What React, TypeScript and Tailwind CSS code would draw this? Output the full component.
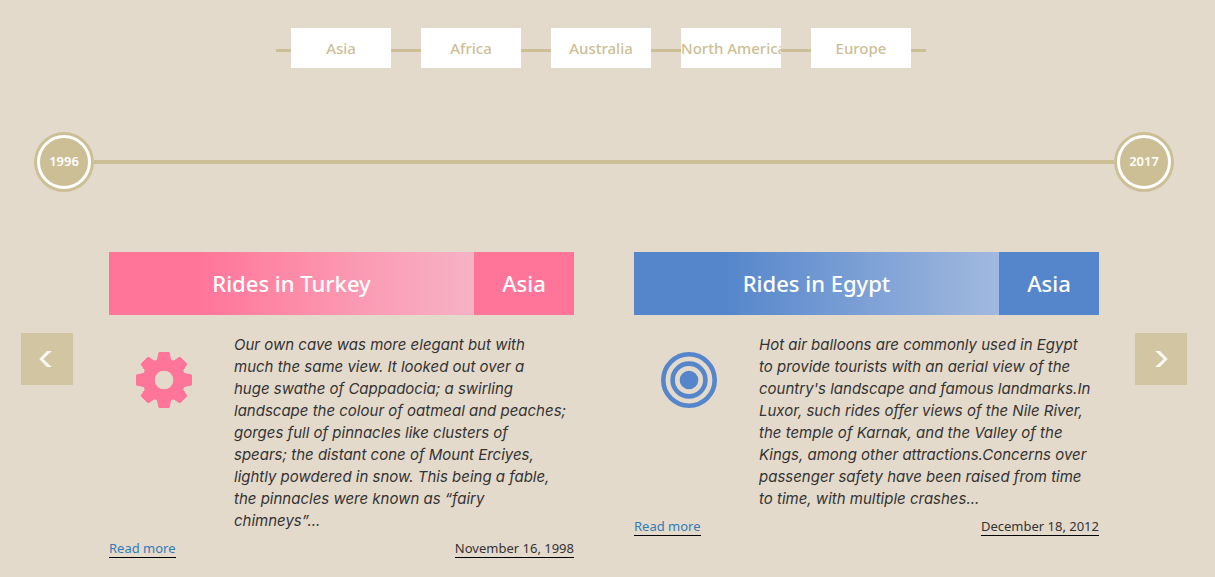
import React from "react";

const regions = ["Asia", "Africa", "Australia", "North America", "Europe"];

function GearIcon() {
  const points: string[] = [];
  for (let i = 0; i < 8; i++) {
    const a = (i * Math.PI) / 4;
    for (const [x, y] of [[-6.6, -20], [-5, -27.5], [5, -27.5], [6.6, -20]]) {
      points.push(
        `${(x * Math.cos(a) - y * Math.sin(a)).toFixed(2)} ${(x * Math.sin(a) + y * Math.cos(a)).toFixed(2)}`
      );
    }
  }
  const d = `M${points.join("L")}ZM-9.8 0a9.8 9.8 0 1 0 19.6 0a9.8 9.8 0 1 0 -19.6 0Z`;
  return (
    <svg viewBox="-28 -28 56 56" className="size-14" aria-hidden="true">
      <path d={d} fill="#ff7599" fillRule="evenodd" stroke="#ff7599" strokeWidth="1" strokeLinejoin="round" />
    </svg>
  );
}

function TargetIcon() {
  return (
    <svg viewBox="-28 -28 56 56" className="size-14" fill="none" stroke="#5586cb" aria-hidden="true">
      <circle r="25.7" strokeWidth="4.6" />
      <circle r="16.4" strokeWidth="4.6" />
      <circle r="9.3" fill="#5586cb" stroke="none" />
    </svg>
  );
}

type Story = {
  title: string;
  region: string;
  text: string;
  date: string;
  icon: React.ReactNode;
  titleClass: string;
  tagClass: string;
};

const stories: Story[] = [
  {
    title: "Rides in Turkey",
    region: "Asia",
    text: `Our own cave was more elegant but with
much the same view. It looked out over a
huge swathe of Cappadocia; a swirling
landscape the colour of oatmeal and peaches;
gorges full of pinnacles like clusters of
spears; the distant cone of Mount Erciyes,
lightly powdered in snow. This being a fable,
the pinnacles were known as “fairy
chimneys”...`,
    date: "November 16, 1998",
    icon: <GearIcon />,
    titleClass: "bg-linear-to-r from-[#ff7599] from-25% to-[#f6b2c5]",
    tagClass: "bg-[#ff7599]",
  },
  {
    title: "Rides in Egypt",
    region: "Asia",
    text: `Hot air balloons are commonly used in Egypt
to provide tourists with an aerial view of the
country's landscape and famous landmarks.In
Luxor, such rides offer views of the Nile River,
the temple of Karnak, and the Valley of the
Kings, among other attractions.Concerns over
passenger safety have been raised from time
to time, with multiple crashes...`,
    date: "December 18, 2012",
    icon: <TargetIcon />,
    titleClass: "bg-linear-to-r from-[#5586cb] from-25% to-[#a2b9df]",
    tagClass: "bg-[#5586cb]",
  },
];

function YearBadge({ year }: { year: string }) {
  return (
    <div className="flex size-[60px] shrink-0 items-center justify-center rounded-full bg-[#ccbe95]">
      <div className="flex size-[54px] items-center justify-center rounded-full border-3 border-white text-[13px] font-semibold text-white">
        {year}
      </div>
    </div>
  );
}

function ArrowButton({ label, d }: { label: string; d: string }) {
  return (
    <button
      type="button"
      aria-label={label}
      className="mt-[81px] flex size-[52px] shrink-0 items-center justify-center bg-[#d2c5a2]"
    >
      <svg viewBox="0 0 16 16" className="size-4 fill-[#f9f8f4]" aria-hidden="true">
        <path d={d} />
      </svg>
    </button>
  );
}

function StoryCard({ story }: { story: Story }) {
  return (
    <article className="text-[#333]">
      <header className="flex h-[63px] text-[22px] font-medium text-white">
        <h2 className={`flex flex-1 items-center justify-center ${story.titleClass}`}>{story.title}</h2>
        <span className={`flex w-[100px] items-center justify-center ${story.tagClass}`}>{story.region}</span>
      </header>
      <div className="mt-[19px] flex">
        <div className="flex w-[125px] shrink-0 justify-start pt-[18px] pl-[27px]">{story.icon}</div>
        <p className="min-w-0 flex-1 font-['Inter','Noto_Sans',sans-serif] text-[15px] leading-[22px] whitespace-pre italic">
          {story.text}
        </p>
      </div>
      <footer className="mt-2 flex justify-between text-[13px] leading-[17px]">
        <a href="#story" className="border-b border-black text-[#337ab7]">Read more</a>
        <time className="border-b border-black">{story.date}</time>
      </footer>
    </article>
  );
}

export default function App() {
  return (
    <main className="min-h-screen bg-[#e4dacb] pt-7 pr-[7px] font-['Noto_Sans','Open_Sans',sans-serif]">
      <nav aria-label="Regions" className="flex justify-center pr-[6px]">
        <div className="flex items-center">
          <span className="mt-[5px] h-[3px] w-[15px] bg-[#ccbe95]" />
          {regions.map((name, i) => (
            <React.Fragment key={name}>
              {i > 0 && <span className="mt-[5px] h-[3px] w-[30px] bg-[#ccbe95]" />}
              <button
                type="button"
                className="flex h-10 w-[100px] items-center overflow-hidden bg-white text-[15px] font-medium whitespace-nowrap text-[#ccbe95]"
              >
                <span className="mx-auto">{name}</span>
              </button>
            </React.Fragment>
          ))}
          <span className="mt-[5px] h-[3px] w-[15px] bg-[#ccbe95]" />
        </div>
      </nav>

      <div className="mt-16 flex items-center px-[34px]">
        <YearBadge year="1996" />
        <div className="h-1 flex-1 bg-[#ccbe95]" />
        <YearBadge year="2017" />
      </div>

      <section aria-label="Stories" className="mt-[60px] flex items-start gap-9 px-[21px]">
        <ArrowButton label="Previous" d="M8 0H12.800L4.300 8L12.800 16H8L0.300 8Z" />
        <div className="grid min-w-0 flex-1 grid-cols-2 items-start gap-[60px]">
          {stories.map((story) => (
            <StoryCard key={story.title} story={story} />
          ))}
        </div>
        <ArrowButton label="Next" d="M7 0H2.200L10.700 8L2.200 16H7L14.700 8Z" />
      </section>
    </main>
  );
}
